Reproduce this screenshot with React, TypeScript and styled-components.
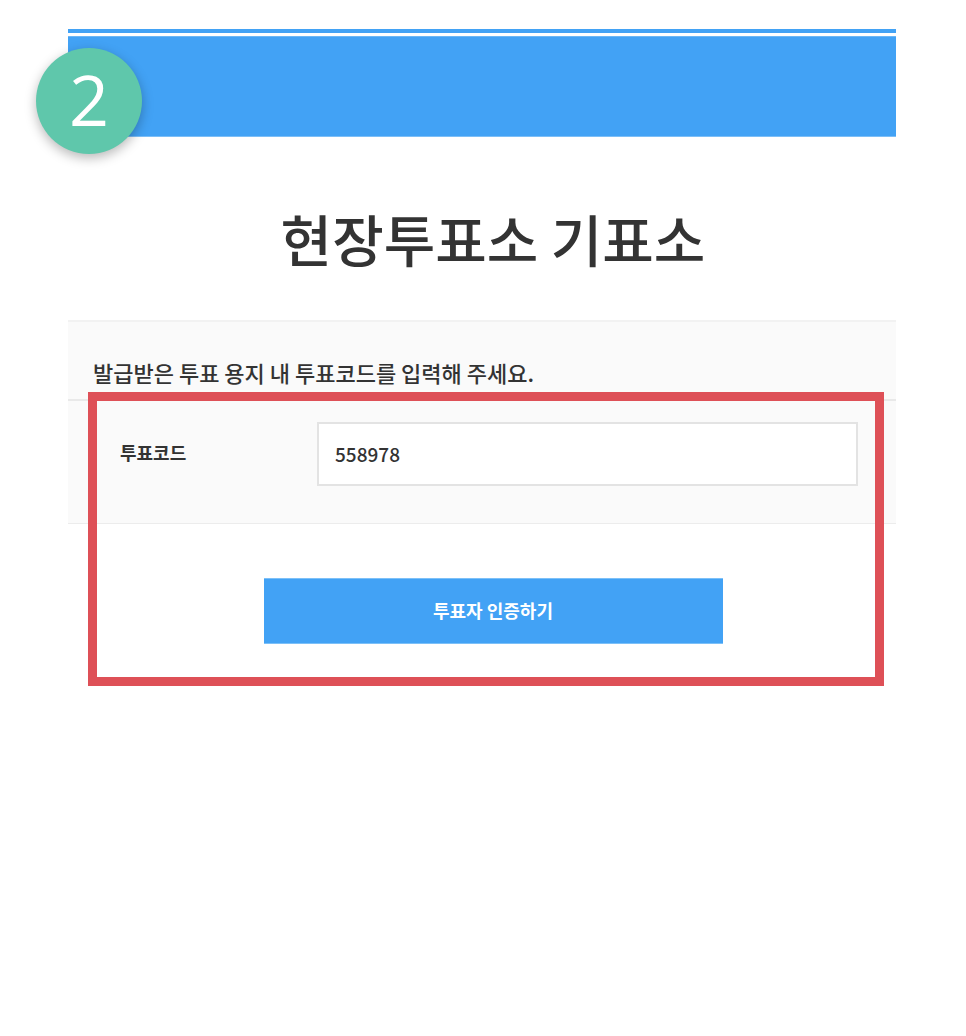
import React from "react";
import styled, { createGlobalStyle } from "styled-components";

const GlobalStyle = createGlobalStyle`
  html, body {
    margin: 0;
    padding: 0;
    background: #ffffff;
  }
  body {
    font-family: "Noto Sans CJK KR", "Noto Sans", sans-serif;
    color: #333333;
  }
  * {
    box-sizing: border-box;
  }
`;

const BLUE = "#42a2f5";

const Page = styled.div`
  position: relative;
  width: 966px;
  height: 1036px;
  padding: 29px 0 0 68px;
  overflow: hidden;
`;

const Banner = styled.div`
  width: 828px;
  display: flex;
  flex-direction: column;
  gap: 3px;
`;

const BannerLine = styled.div`
  height: 4px;
  background: ${BLUE};
`;

const BannerBlock = styled.div`
  height: 101px;
  background: ${BLUE};
  border-top: 1px solid #6ab6f7;
  border-bottom: 1px solid #7cbef7;
`;

const StepBadge = styled.div`
  position: absolute;
  left: 36px;
  top: 48px;
  width: 106px;
  height: 106px;
  border-radius: 50%;
  background: #5fc7ab;
  box-shadow: 0 4px 12px rgba(0, 0, 0, 0.28);
  display: flex;
  align-items: center;
  justify-content: center;
  color: #ffffff;
  font-family: "Open Sans", "Noto Sans", sans-serif;
  font-size: 70px;
  font-weight: 500;
  line-height: 1;
  padding-bottom: 4px;
`;

const Title = styled.h1`
  width: 850px;
  margin: 0;
  height: 183px;
  display: flex;
  align-items: center;
  justify-content: center;
  font-size: 56px;
  font-weight: 500;
  color: #333333;
  line-height: 1;
  padding-top: 18px;
`;

const Panel = styled.section`
  width: 828px;
  background: #fafafa;
  border-top: 2px solid #f2f2f2;
`;

const PanelHead = styled.div`
  height: 79px;
  padding: 28px 0 0 25px;
  border-bottom: 2px solid #e9e9e9;
  font-size: 22px;
  font-weight: 500;
  color: #333333;
  line-height: 44px;
  white-space: nowrap;
`;

const FieldRow = styled.div`
  height: 123px;
  display: flex;
  align-items: flex-start;
  padding: 21px 38px 0 52px;
  border-bottom: 1px solid #ececec;
`;

const FieldLabel = styled.label`
  width: 197px;
  height: 64px;
  display: flex;
  align-items: center;
  font-size: 18px;
  font-weight: 700;
  color: #333333;
  padding-bottom: 4px;
`;

const CodeInput = styled.input`
  width: 541px;
  height: 64px;
  border: 2px solid #e3e3e3;
  background: #ffffff;
  padding: 0 16px 2px;
  font-family: "Noto Sans CJK KR", "Noto Sans", sans-serif;
  font-size: 19px;
  font-weight: 500;
  color: #333333;
  outline: none;
`;

const Actions = styled.div`
  width: 850px;
  display: flex;
  justify-content: center;
  padding-top: 54px;
`;

const PrimaryButton = styled.button`
  width: 459px;
  height: 66px;
  border: none;
  border-top: 1px solid #7cc0f8;
  border-bottom: 1px solid #7cc0f8;
  background: ${BLUE};
  color: #ffffff;
  font-family: "Noto Sans CJK KR", "Noto Sans", sans-serif;
  font-size: 18px;
  font-weight: 700;
  padding-bottom: 4px;
  cursor: pointer;
`;

const Highlight = styled.div`
  position: absolute;
  left: 88px;
  top: 392px;
  width: 796px;
  height: 294px;
  border: 9px solid #de5057;
  pointer-events: none;
`;

export default function App() {
  return (
    <>
      <GlobalStyle />
      <Page>
        <Banner>
          <BannerLine />
          <BannerBlock />
        </Banner>
        <StepBadge>2</StepBadge>
        <Title>현장투표소 기표소</Title>
        <Panel>
          <PanelHead>발급받은 투표 용지 내 투표코드를 입력해 주세요.</PanelHead>
          <FieldRow>
            <FieldLabel htmlFor="vote-code">투표코드</FieldLabel>
            <CodeInput id="vote-code" defaultValue="558978" />
          </FieldRow>
        </Panel>
        <Actions>
          <PrimaryButton>투표자 인증하기</PrimaryButton>
        </Actions>
        <Highlight />
      </Page>
    </>
  );
}
